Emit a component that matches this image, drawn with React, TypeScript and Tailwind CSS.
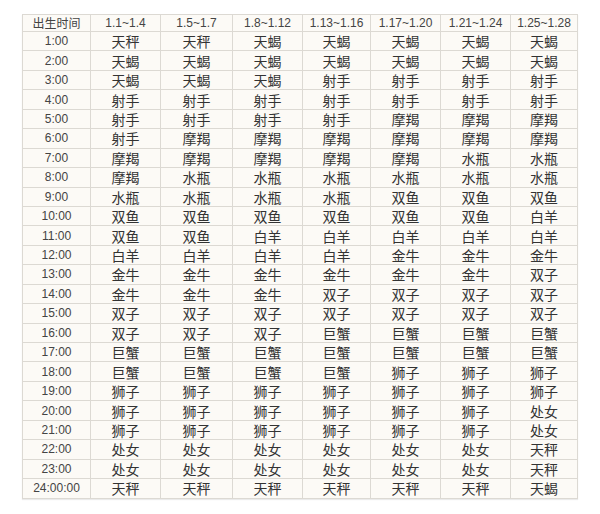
import React from "react";

const header = ["出生时间", "1.1~1.4", "1.5~1.7", "1.8~1.12", "1.13~1.16", "1.17~1.20", "1.21~1.24", "1.25~1.28"];

const rows: string[][] = [
  ["1:00", "天秤", "天秤", "天蝎", "天蝎", "天蝎", "天蝎", "天蝎"],
  ["2:00", "天蝎", "天蝎", "天蝎", "天蝎", "天蝎", "天蝎", "天蝎"],
  ["3:00", "天蝎", "天蝎", "天蝎", "射手", "射手", "射手", "射手"],
  ["4:00", "射手", "射手", "射手", "射手", "射手", "射手", "射手"],
  ["5:00", "射手", "射手", "射手", "射手", "摩羯", "摩羯", "摩羯"],
  ["6:00", "射手", "摩羯", "摩羯", "摩羯", "摩羯", "摩羯", "摩羯"],
  ["7:00", "摩羯", "摩羯", "摩羯", "摩羯", "摩羯", "水瓶", "水瓶"],
  ["8:00", "摩羯", "水瓶", "水瓶", "水瓶", "水瓶", "水瓶", "水瓶"],
  ["9:00", "水瓶", "水瓶", "水瓶", "水瓶", "双鱼", "双鱼", "双鱼"],
  ["10:00", "双鱼", "双鱼", "双鱼", "双鱼", "双鱼", "双鱼", "白羊"],
  ["11:00", "双鱼", "双鱼", "白羊", "白羊", "白羊", "白羊", "白羊"],
  ["12:00", "白羊", "白羊", "白羊", "白羊", "金牛", "金牛", "金牛"],
  ["13:00", "金牛", "金牛", "金牛", "金牛", "金牛", "金牛", "双子"],
  ["14:00", "金牛", "金牛", "金牛", "双子", "双子", "双子", "双子"],
  ["15:00", "双子", "双子", "双子", "双子", "双子", "双子", "双子"],
  ["16:00", "双子", "双子", "双子", "巨蟹", "巨蟹", "巨蟹", "巨蟹"],
  ["17:00", "巨蟹", "巨蟹", "巨蟹", "巨蟹", "巨蟹", "巨蟹", "巨蟹"],
  ["18:00", "巨蟹", "巨蟹", "巨蟹", "巨蟹", "狮子", "狮子", "狮子"],
  ["19:00", "狮子", "狮子", "狮子", "狮子", "狮子", "狮子", "狮子"],
  ["20:00", "狮子", "狮子", "狮子", "狮子", "狮子", "狮子", "处女"],
  ["21:00", "狮子", "狮子", "狮子", "狮子", "狮子", "狮子", "处女"],
  ["22:00", "处女", "处女", "处女", "处女", "处女", "处女", "天秤"],
  ["23:00", "处女", "处女", "处女", "处女", "处女", "处女", "天秤"],
  ["24:00:00", "天秤", "天秤", "天秤", "天秤", "天秤", "天秤", "天蝎"],
];

const cjk = "font-['Noto_Sans_CJK_SC',sans-serif]";
const latin = "font-['Liberation_Sans','Noto_Sans_CJK_SC',sans-serif]";

export default function App() {
  return (
    <div className="w-[600px] h-[514px] bg-white pt-[14px] pl-[22px]">
      <table className="table-fixed border-collapse bg-[#fcfaf6] w-[555px] border border-[#dcd9d3] shadow-[0_1px_1px_rgba(0,0,0,0.08)]">
        <colgroup>
          <col className="w-[68px]" />
          <col className="w-[70px]" />
          <col className="w-[72px]" />
          <col className="w-[70px]" />
          <col className="w-[68px]" />
          <col className="w-[70px]" />
          <col className="w-[70px]" />
          <col className="w-[67px]" />
        </colgroup>
        <thead>
          <tr className="h-[17px]">
            {header.map((h, i) => (
              <th
                key={i}
                className={`border border-[#dcd9d3] p-0 text-center font-normal leading-none text-[12px] text-[#444] ${i === 0 ? cjk : latin}`}
              >
                {h}
              </th>
            ))}
          </tr>
        </thead>
        <tbody>
          {rows.map((r, ri) => (
            <tr key={ri} className="h-[19.45px]">
              {r.map((c, ci) => (
                <td
                  key={ci}
                  className={`border border-[#dcd9d3] p-0 text-center leading-none ${
                    ci === 0 ? `${latin} text-[12px] text-[#444]` : `${cjk} text-[14px] text-[#333]`
                  }`}
                >
                  {c}
                </td>
              ))}
            </tr>
          ))}
        </tbody>
      </table>
    </div>
  );
}
